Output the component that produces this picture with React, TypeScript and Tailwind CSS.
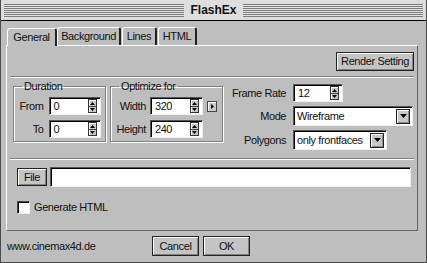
import type { ReactNode } from 'react';

// Classic Mac OS "FlashEx" export dialog

const stripes =
  'bg-[repeating-linear-gradient(to_bottom,#7c7c7c_0px,#7c7c7c_1px,#e4e4e4_1px,#e4e4e4_2px)]';

function Spinner() {
  return (
    <div className="w-[9px] h-[14px] bg-[#c8c8c8] border border-[#333] flex flex-col items-center justify-center gap-[1px] shadow-[inset_1px_1px_0_#fff]">
      <svg width="5" height="3" viewBox="0 0 5 3">
        <path d="M2.5 0L5 3H0z" fill="#000" />
      </svg>
      <div className="w-full h-px bg-[#444]" />
      <svg width="5" height="3" viewBox="0 0 5 3">
        <path d="M0 0H5L2.5 3z" fill="#000" />
      </svg>
    </div>
  );
}

function NumField({ value, w }: { value: string; w: string }) {
  return (
    <div
      className={`${w} h-[18px] bg-white border border-t-[#555] border-l-[#555] border-r-[#f0f0f0] border-b-[#f0f0f0] shadow-[inset_1px_1px_0_#000] flex items-center pl-[4px] pr-[3px]`}
    >
      <span className="flex-1 leading-none">{value}</span>
      <Spinner />
    </div>
  );
}

function Select({ value, w }: { value: string; w: string }) {
  return (
    <div
      className={`${w} h-[20px] bg-white border border-t-[#555] border-l-[#555] border-r-[#f0f0f0] border-b-[#f0f0f0] shadow-[inset_1px_1px_0_#000] flex items-center pl-[3px] pr-[2px]`}
    >
      <span className="flex-1 leading-none">{value}</span>
      <div className="w-[14px] h-[15px] bg-[#c8c8c8] border border-[#222] shadow-[inset_1px_1px_0_#fff,inset_-1px_-1px_0_#888] flex items-center justify-center">
        <svg width="7" height="4" viewBox="0 0 7 4">
          <path d="M0 0H7L3.5 4z" fill="#000" />
        </svg>
      </div>
    </div>
  );
}

function Btn({ children, className = '' }: { children: ReactNode; className?: string }) {
  return (
    <div
      className={`bg-[#c4c4c4] border border-[#222] shadow-[inset_1px_1px_0_#fff,inset_-1px_-1px_0_#808080] flex items-center justify-center leading-none ${className}`}
    >
      {children}
    </div>
  );
}

function Group({ title, children, w }: { title: string; children: ReactNode; w: string }) {
  return (
    <fieldset
      className={`${w} border border-[#808080] shadow-[1px_1px_0_#fff,inset_1px_1px_0_#fff] pl-[5px] pr-[4px] pb-[3px]`}
    >
      <legend className="ml-[3px] px-[2px] leading-[13px]">{title}</legend>
      {children}
    </fieldset>
  );
}

const tabs = [
  { label: 'General', w: 'w-[50px]', active: true },
  { label: 'Background', w: 'w-[64px]', active: false },
  { label: 'Lines', w: 'w-[35px]', active: false },
  { label: 'HTML', w: 'w-[39px]', active: false },
];

export default function App() {
  return (
    <div className="w-[427px] h-[263px] bg-[#bebebe] border-x border-b border-[#4a4a4a] flex flex-col font-['Liberation_Sans',Arial,sans-serif] text-[11px] tracking-[-0.4px] text-[#111]">
      {/* Title bar */}
      <div className="h-[21px] bg-[#dedede] border-b border-black flex items-center px-[3px]">
        <div className={`flex-1 h-[13px] ${stripes}`} />
        <span className="px-[6px] font-bold text-[12px] tracking-normal leading-none">FlashEx</span>
        <div className={`flex-1 h-[13px] ${stripes}`} />
      </div>

      <div className="flex-1 flex flex-col pl-[5px] pr-[8px] pt-[6px]">
        {/* Tabs */}
        <div className="flex items-end h-[18px] pl-[1px] relative z-10">
          {tabs.map((t) => (
            <div
              key={t.label}
              className={`${t.w} h-full flex items-center justify-center rounded-t-[3px] border-t border-l border-t-white border-l-white border-r-2 border-r-[#222] ${
                t.active ? 'bg-[#bebebe] h-[19px] mb-[-1px]' : 'mr-[1px]'
              }`}
            >
              {t.label}
            </div>
          ))}
        </div>

        {/* Panel */}
        <div className="h-[186px] border border-t-white border-l-white border-r-[#666] border-b-[#666] flex flex-col">
          <div className="flex justify-end pt-[6px] pr-[3px]">
            <Btn className="w-[78px] h-[19px]">Render Setting</Btn>
          </div>
          <div className="mt-[5px] mx-[3px] h-[2px] border-t border-t-[#808080] border-b border-b-white" />

          <div className="mt-[2px] flex pl-[6px] items-start">
            <Group title="Duration" w="w-[93px]">
              <div className="grid grid-cols-[auto_auto] gap-x-[5px] gap-y-[5px] items-center mt-[4px]">
                <span className="text-right">From</span>
                <NumField value="0" w="w-[52px]" />
                <span className="text-right">To</span>
                <NumField value="0" w="w-[52px]" />
              </div>
            </Group>
            <Group title="Optimize for" w="w-[113px] ml-[4px]">
              <div className="grid grid-cols-[auto_auto_auto] gap-x-[3px] gap-y-[5px] items-center mt-[4px]">
                <span className="text-right">Width</span>
                <NumField value="320" w="w-[53px] ml-[1px]" />
                <div className="w-[10px] h-[11px] ml-[1px] bg-[#c8c8c8] border border-[#444] shadow-[inset_1px_1px_0_#fff] flex items-center justify-center">
                  <svg width="3" height="5" viewBox="0 0 3 5">
                    <path d="M0 0L3 2.5L0 5z" fill="#000" />
                  </svg>
                </div>
                <span className="text-right">Height</span>
                <NumField value="240" w="w-[53px] ml-[1px]" />
                <span />
              </div>
            </Group>

            <div className="ml-[9px] mt-[4px] grid grid-cols-[auto_auto] gap-x-[7px] gap-y-[4px] items-center">
              <span className="text-right">Frame Rate</span>
              <NumField value="12" w="w-[50px]" />
              <span className="text-right">Mode</span>
              <Select value="Wireframe" w="w-[120px]" />
              <span className="text-right">Polygons</span>
              <Select value="only frontfaces" w="w-[94px]" />
            </div>
          </div>

          <div className="mt-[8px] mx-[3px] h-[2px] border-t border-t-[#808080] border-b border-b-white" />

          <div className="mt-[7px] flex items-center pl-[10px] pr-[6px] gap-[3px]">
            <Btn className="w-[30px] h-[18px]">File</Btn>
            <div className="flex-1 h-[20px] bg-white border border-t-[#555] border-l-[#555] border-r-[#f0f0f0] border-b-[#f0f0f0] shadow-[inset_1px_1px_0_#000]" />
          </div>

          <div className="mt-[12px] flex items-center pl-[10px] gap-[4px]">
            <div className="w-[13px] h-[13px] bg-white border border-t-[#444] border-l-[#444] border-r-[#eee] border-b-[#eee] shadow-[inset_1px_1px_0_#000]" />
            <span>Generate HTML</span>
          </div>
        </div>

        {/* Bottom bar */}
        <div className="flex-1 flex items-center pl-[1px]">
          <span className="w-[145px]">www.cinemax4d.de</span>
          <Btn className="w-[47px] h-[20px] mt-[-1px]">Cancel</Btn>
          <Btn className="w-[47px] h-[20px] mt-[-1px] ml-[4px]">OK</Btn>
        </div>
      </div>
    </div>
  );
}
